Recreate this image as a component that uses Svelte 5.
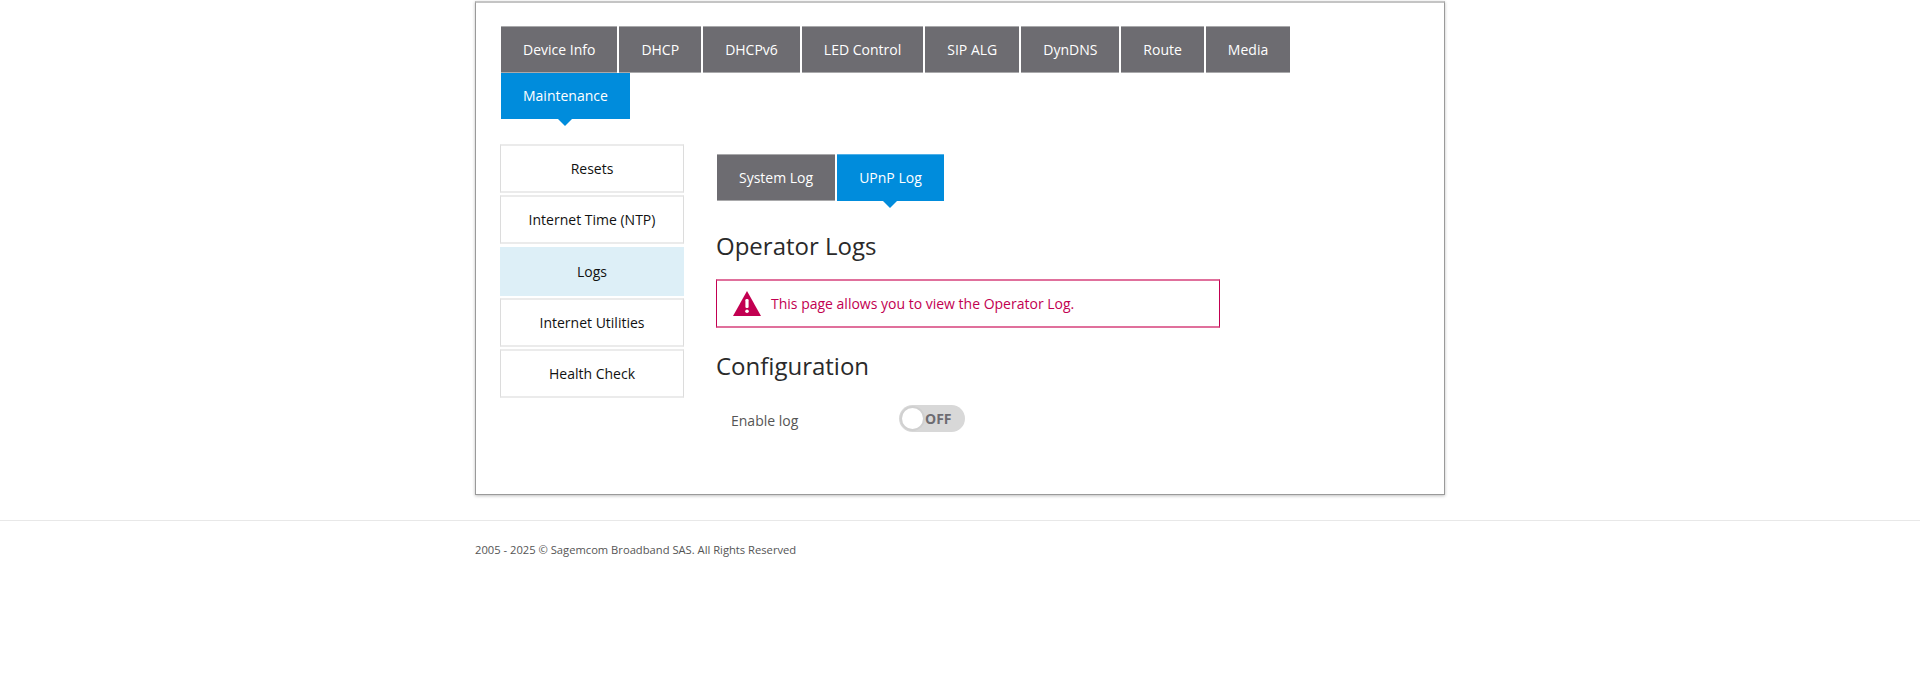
<script>
  const tabs = ['Device Info','DHCP','DHCPv6','LED Control','SIP ALG','DynDNS','Route','Media','Maintenance'];
  const side = ['Resets','Internet Time (NTP)','Logs','Internet Utilities','Health Check'];
</script>

<div class="page">
  <main class="card">
    <nav class="tabs">
      {#each tabs as t}
        <a class="tab" class:active={t === 'Maintenance'}>{t}</a>
      {/each}
    </nav>
    <div class="body">
      <aside class="side">
        {#each side as s}
          <a class="item" class:current={s === 'Logs'}>{s}</a>
        {/each}
      </aside>
      <section class="content">
        <nav class="tabs sub">
          <a class="tab">System Log</a>
          <a class="tab active">UPnP Log</a>
        </nav>
        <h2 class="first">Operator Logs</h2>
        <div class="alert">
          <svg class="warn" width="28" height="25" viewBox="0 0 28 25"><path d="M14 0 L28 25 L0 25 Z" fill="#c20051"/><rect x="12.4" y="8" width="3.2" height="9" rx="1.2" fill="#fff"/><circle cx="14" cy="20.3" r="1.8" fill="#fff"/></svg>
          <span>This page allows you to view the Operator Log.</span>
        </div>
        <h2 class="second">Configuration</h2>
        <div class="row">
          <label>Enable log</label>
          <div class="toggle"><span class="knob"></span><span class="off">OFF</span></div>
        </div>
      </section>
    </div>
  </main>
  <footer>
    <div class="foot">2005 - 2025 © Sagemcom Broadband SAS. All Rights Reserved</div>
  </footer>
</div>

<style>
  :global(body) { margin: 0; background: #fff; }
  .page { font-family: "Open Sans", "Liberation Sans", sans-serif; min-height: 687px; padding-top: 1px; box-sizing: border-box; }
  .card {
    width: 970px; height: 494px; box-sizing: border-box; margin: 0 auto 0 475px;
    border: 1px solid #9a9a9a; border-top: 2px solid #c4c4c4; box-shadow: 0 1px 3px rgba(0,0,0,.25);
    padding: 23px 25px 0 25px; background: #fff;
  }
  .tabs { display: flex; flex-wrap: wrap; column-gap: 2px; }
  .tab {
    position: relative; display: block; background: #6d6c71; color: #fff; font-size: 14px; line-height: 46px;
    height: 46px; padding: 0 22px; border-top: 1px solid #a9a9ab; box-sizing: content-box;
    box-shadow: inset 0 -1px 0 #a9a9ab;
  }
  .tab.active { background: #008cdc; border-top: 0; box-shadow: none; }
  .sub .tab.active { border-top: 1px solid #4fb0e8; }
  .tab.active::after {
    content: ''; position: absolute; left: 50%; bottom: -7px; margin-left: -7px;
    border-left: 7px solid transparent; border-right: 7px solid transparent; border-top: 7px solid #008cdc;
  }
  .body { display: flex; margin-top: 25px; margin-left: -1px; }
  .side { width: 184px; display: flex; flex-direction: column; gap: 2.25px; flex: none; }
  .item {
    display: block; box-sizing: border-box; height: 49px; line-height: 45px; text-align: center;
    border-style: solid; border-width: 2px 1px; border-color: #ebebeb #dcdcdc; font-size: 14px; color: #111;
  }
  .item.current { background: #ddeff7; border-color: #ddeff7; }
  .content { margin-left: 32px; padding-top: 10px; width: 504px; }
  .sub { margin-left: 1px; }
  h2 { font-weight: 400; font-size: 24px; line-height: 32px; color: #2a2a2a; margin: 0; }
  h2.first { margin-top: 29px; }
  .alert {
    display: flex; align-items: center; box-sizing: border-box; height: 49px; margin-top: 17px;
    border-style: solid; border-width: 2px 1px; border-color: #e0709c #c20051;
    color: #c20051; font-size: 14px; padding-left: 16px;
  }
  .warn { margin-right: 10px; flex: none; }
  h2.second { margin-top: 22px; }
  .row { display: flex; align-items: center; margin-top: 21.5px; padding-left: 15px; height: 30px; }
  label { width: 168px; font-size: 14px; color: #555; padding-top: 3px; }
  .toggle {
    position: relative; width: 66px; height: 27px; border-radius: 14px; background: #d8d8d8;
    display: flex; align-items: center; box-sizing: border-box;
  }
  .knob { position: absolute; left: 1px; top: 1px; width: 25px; height: 25px; box-sizing: border-box; border-radius: 50%; background: #fff; border: 2px solid #d0d0d0; }
  .off { margin-left: 26px; font-size: 14px; font-weight: 700; color: #6d6c71; }
  footer { margin-top: 25px; border-top: 1px solid #e8e8e8; }
  .foot { margin-left: 475px; margin-top: 21px; font-size: 11.2px; line-height: 15px; color: #555; }
</style>
